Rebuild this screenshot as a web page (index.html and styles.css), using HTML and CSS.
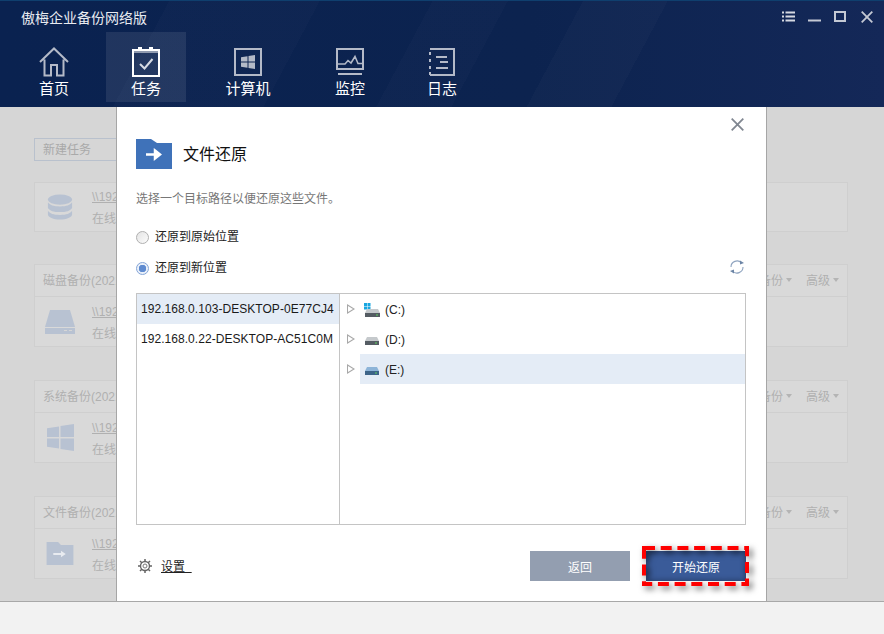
FILE: index.html
```html
<!DOCTYPE html>
<html lang="zh-CN">
<head>
<meta charset="utf-8">
<title>傲梅企业备份网络版</title>
<link rel="stylesheet" href="styles.css">
</head>
<body>
<div class="app">
  <header class="header">
    <div class="titlebar">
      <span class="app-title">傲梅企业备份网络版</span>
      <div class="win-controls">
        <svg class="wc" width="13" height="11" viewBox="0 0 13 11"><path d="M0 1.500h2M3.500 1.500h9.500M0 5.500h2M3.500 5.500h9.500M0 9.500h2M3.500 9.500h9.500" stroke="#d5d9e2" stroke-width="2" fill="none"/></svg>
        <svg class="wc" width="13" height="11" viewBox="0 0 13 11"><path d="M0 9.500h13" stroke="#c4c9d4" stroke-width="2"/></svg>
        <svg class="wc" width="12" height="11" viewBox="0 0 12 11"><rect x="1" y="1" width="10" height="9" stroke="#c4c9d4" stroke-width="2" fill="none"/></svg>
        <svg class="wc" width="12" height="12" viewBox="0 0 12 12"><path d="M.7.7l10.600 10.600M11.300.7L.7 11.300" stroke="#c4c9d4" stroke-width="1.800" fill="none"/></svg>
      </div>
    </div>
    <nav class="nav">
      <div class="nav-item">
        <svg width="30" height="30" viewBox="0 0 30 30"><path d="M1 15L15 1.500 29 15M5.500 12.500V28.500H12V18h6v10.500h6.500V12.500" fill="none" stroke="#b4bac8" stroke-width="2"/></svg>
        <span>首页</span>
      </div>
      <div class="nav-item active gap-s">
        <svg width="28" height="30" viewBox="0 0 28 30"><path d="M1 3h26v26H1z" fill="none" stroke="#fff" stroke-width="2"/><path d="M6 0h4v4H6zM17 0h4v4h-4z" fill="#fff"/><path d="M1 5h26" stroke="#fff" stroke-width="1"/><path d="M8 17l4.500 4.500L20.500 12" fill="none" stroke="#d7dbe4" stroke-width="2"/></svg>
        <span>任务</span>
      </div>
      <div class="nav-item gap-l">
        <svg width="28" height="28" viewBox="0 0 28 28"><rect x="1" y="1" width="26" height="26" fill="none" stroke="#b4bac8" stroke-width="2"/><path d="M7 9.200l6.500-1v5.400H7zM14.500 8l6.500-1v6.600h-6.500zM7 14.600h6.500v5.200l-6.500-1zM14.500 14.600H21V21l-6.500-1z" fill="#b4bac8"/></svg>
        <span>计算机</span>
      </div>
      <div class="nav-item gap-l">
        <svg width="28" height="28" viewBox="0 0 28 28"><path d="M1 1h26v20H1z" fill="none" stroke="#b4bac8" stroke-width="2"/><path d="M2 16h7l3-3.500 3 2.500 4-6.500 3 7h5" fill="none" stroke="#b4bac8" stroke-width="1.500"/><path d="M2 26h24" stroke="#b4bac8" stroke-width="2"/></svg>
        <span>监控</span>
      </div>
      <div class="nav-item gap-s">
        <svg width="26" height="28" viewBox="0 0 26 28"><path d="M1 1h24v26H1" fill="none" stroke="#b4bac8" stroke-width="2"/><path d="M0 4h2v3H0zM0 11h2v3H0zM0 18h2v3H0zM0 24h2v3H0zM7 8h11v2H7zM11 13h8v2h-8zM7 19h12v2H7z" fill="#b4bac8"/></svg>
        <span>日志</span>
      </div>
    </nav>
  </header>

  <main class="content">
    <div class="fake-input">新建任务</div>

    <section class="card first">
      <div class="card-body">
        <svg width="26" height="26" viewBox="0 0 28 28"><ellipse cx="14" cy="6" rx="13" ry="5.500" fill="#b8c2d2"/><path d="M1 9c2 3 6 4.500 13 4.500S25 12 27 9v6c-2 3-6 4.500-13 4.500S3 18 1 15zM1 18c2 3 6 4.500 13 4.500S25 21 27 18v4c0 3-6 5.500-13 5.500S1 25 1 22z" fill="#b8c2d2"/></svg>
        <div class="card-text"><span class="path">\\192</span><span class="state">在线</span></div>
      </div>
    </section>

    <section class="card">
      <div class="card-head"><span>磁盘备份(2021</span><div class="ops"><span>备份</span><i></i><span class="op2">高级</span><i></i></div></div>
      <div class="card-body">
        <svg width="30" height="24" viewBox="0 0 30 24"><path d="M5 0h20l5 17H0z" fill="#b8c2d2"/><path d="M0 18h30v6H0z" fill="#b8c2d2"/><path d="M19 20.500h3M24 20.500h3" stroke="#d6d6d6"/></svg>
        <div class="card-text"><span class="path">\\192</span><span class="state">在线</span></div>
      </div>
    </section>

    <section class="card">
      <div class="card-head"><span>系统备份(2021</span><div class="ops"><span>备份</span><i></i><span class="op2">高级</span><i></i></div></div>
      <div class="card-body">
        <svg width="27" height="27" viewBox="0 0 28 28"><path d="M0 4.500l12.500-2v11H0zM14 2.200L28 0v13.500H14zM0 15h12.500v10.500L0 23.500zM14 15h14v13l-14-2.200z" fill="#b8c2d2"/></svg>
        <div class="card-text"><span class="path">\\192</span><span class="state">在线</span></div>
      </div>
    </section>

    <section class="card">
      <div class="card-head"><span>文件备份(2021</span><div class="ops"><span>备份</span><i></i><span class="op2">高级</span><i></i></div></div>
      <div class="card-body">
        <svg width="28" height="23" viewBox="0 0 28 24"><path d="M0 0h12l3 3h13v21H0z" fill="#b8c2d2"/><path d="M7 11.500h8V9l5 3.500-5 3.500v-2.500H7z" fill="#e8ebf0"/></svg>
        <div class="card-text"><span class="path">\\192</span><span class="state">在线</span></div>
      </div>
    </section>
  </main>

  <footer class="footer"></footer>

  <div class="modal">
    <button class="close" aria-label="关闭"><svg width="13" height="13" viewBox="0 0 13 13"><path d="M.7.7l11.600 11.600M12.300.7L.7 12.300" stroke="#808791" stroke-width="1.800" fill="none"/></svg></button>
    <div class="modal-title">
      <svg width="36" height="30" viewBox="0 0 36 30"><path d="M0 0h15l6 4h15v26H0z" fill="#3f72b9"/><path d="M10 15.500h14M19 11.500l5 4-5 4z" stroke="#fff" stroke-width="2.500" fill="#fff"/></svg>
      <h1>文件还原</h1>
    </div>
    <p class="hint">选择一个目标路径以便还原这些文件。</p>
    <label class="radio"><span class="dot"></span>还原到原始位置</label>
    <div class="radio-row">
      <label class="radio"><span class="dot on"></span>还原到新位置</label>
      <svg class="refresh" width="16" height="14" viewBox="0 0 16 14"><path d="M2 7a6 6 0 0 1 10.500-4" fill="none" stroke="#8ea3bf" stroke-width="1.100"/><path d="M14 7a6 6 0 0 1-10.500 4" fill="none" stroke="#8ea3bf" stroke-width="1.100"/><path d="M11 .5l4 2.500-4 1.500zM5 13.500L1 11l4-1.500z" fill="#6c85a6"/></svg>
    </div>
    <div class="browser">
      <ul class="hosts">
        <li class="sel">192.168.0.103-DESKTOP-0E77CJ4</li>
        <li>192.168.0.22-DESKTOP-AC51C0M</li>
      </ul>
      <ul class="drives">
        <li><span class="tri"></span><span class="drive-cell"><svg class="drive" width="16" height="14" viewBox="0 0 16 14"><path d="M0 0h3v3H0zM3.500 0h3v3h-3zM0 3.500h3v3H0zM3.500 3.500h3v3h-3z" fill="#19a6e0"/><path d="M3 6h11l2 4H1z" fill="#c5c9cc"/><path d="M1 10h15v4H1z" fill="#555c63"/><path d="M12 11.500h2v1h-2z" fill="#5fd15f"/></svg><span>(C:)</span></span></li>
        <li><span class="tri"></span><span class="drive-cell"><svg class="drive" width="16" height="14" viewBox="0 0 16 14"><path d="M3 4h10l2 4H1z" fill="#c5c9cc"/><path d="M1 8h14v4H1z" fill="#555c63"/><path d="M11 9.500h2v1h-2z" fill="#5fd15f"/></svg><span>(D:)</span></span></li>
        <li><span class="tri"></span><span class="drive-cell sel"><svg class="drive" width="16" height="14" viewBox="0 0 16 14"><path d="M3 4h10l2 4H1z" fill="#8db4d8"/><path d="M1 8h14v4H1z" fill="#3d6488"/><path d="M11 9.500h2v1h-2z" fill="#5fd15f"/></svg><span>(E:)</span></span></li>
      </ul>
    </div>
    <div class="modal-foot">
      <div class="settings">
        <svg width="14" height="14" viewBox="0 0 14 14"><circle cx="7" cy="7" r="4.500" fill="none" stroke="#666" stroke-width="1.400"/><circle cx="7" cy="7" r="2" fill="none" stroke="#777"/><path d="M7 0v2.500M7 11.500V14M0 7h2.500M11.500 7H14M2 2l1.800 1.800M10.200 10.200L12 12M12 2l-1.800 1.800M3.800 10.200L2 12" stroke="#666" stroke-width="1.500"/></svg>
        <a class="settings-link">设置&nbsp;&nbsp;</a>
      </div>
      <button class="btn back">返回</button>
      <div class="start-wrap">
        <button class="btn start">开始还原</button>
        <svg class="marker" width="107" height="40" viewBox="0 0 107 40"><rect x="2" y="2" width="103" height="36" fill="none" stroke="#fe0000" stroke-width="4" stroke-dasharray="11 5.700"/></svg>
      </div>
    </div>
  </div>
</div>
</body>
</html>
```
FILE: styles.css
```css
* { box-sizing: border-box; }
html, body { margin: 0; padding: 0; }
body {
  width: 884px;
  height: 634px;
  overflow: hidden;
  font-family: "Liberation Sans", "Noto Sans CJK SC", sans-serif;
}
.app {
  position: relative;
  width: 884px;
  height: 634px;
  display: flex;
  flex-direction: column;
  background: #f2f2f2;
}
.header {
  height: 107px;
  flex: none;
  color: #fff;
  border-top: 1px solid #0f3f6e;
  background:
    linear-gradient(118deg, transparent 0 62%, rgba(255,255,255,.02) 62% 71%, transparent 71% 100%),
    linear-gradient(118deg, transparent 0 18%, rgba(255,255,255,.015) 18% 34%, transparent 34% 46%, rgba(255,255,255,.015) 46% 54%, transparent 54%),
    linear-gradient(90deg, #0a2250 0%, #0c234f 60%, #142858 100%);
}
.titlebar {
  height: 31px;
  display: flex;
  align-items: center;
  justify-content: space-between;
  padding: 0 11px 0 21px;
}
.app-title { font-size: 14px; color: #e8ebf0; }
.win-controls { display: flex; align-items: center; gap: 13px; }
.wc:nth-child(3) { margin-right: 2px; }
.nav { display: flex; padding-left: 14px; }
.nav-item {
  width: 80px;
  height: 70px;
  display: flex;
  flex-direction: column;
  align-items: center;
  padding-top: 15px;
  font-size: 15px;
}
.nav-item svg { height: 30px; flex: none; }
.nav-item span { margin-top: 2px; line-height: 20px; }
.nav-item.active { background: rgba(255,255,255,.09); }
.gap-s { margin-left: 12px; }
.gap-l { margin-left: 22px; }

.content {
  height: 495px;
  flex: none;
  background: #d6d6d6;
  border-bottom: 1px solid #a8a8a8;
  padding: 31px 36px 0 34px;
  color: #b0b0b0;
  font-size: 12px;
}
.fake-input {
  width: 120px;
  height: 23px;
  border: 1px solid #b9c1cd;
  padding-left: 8px;
  line-height: 23px;
  color: #a9a9a9;
}
.card {
  border: 1px solid #cfcfcf;
  background: #d9d9d9;
  margin-top: 33px;
}
.card.first { margin-top: 21px; }
.first + .card { margin-top: 32px; }
.card-head {
  height: 32px;
  padding: 0 8px 2px;
  display: flex;
  align-items: center;
  justify-content: space-between;
  border-bottom: 1px solid #cfcfcf;
}
.ops { display: flex; align-items: center; }
.ops i {
  width: 0;
  height: 0;
  margin-left: 3px;
  border-left: 3.500px solid transparent;
  border-right: 3.500px solid transparent;
  border-top: 4px solid #b4b4b4;
}
.op2 { margin-left: 14px; }
.card-body {
  height: 49px;
  display: grid;
  grid-template-columns: 30px auto;
  justify-content: start;
  justify-items: center;
  align-items: center;
  column-gap: 17px;
  padding-left: 10px;
}
.first .card-body { height: 48px; }
.card-text {
  justify-self: start;
  display: flex;
  flex-direction: column;
  line-height: 22px;
  padding-top: 2px;
}
.path { text-decoration: underline; }

.footer { flex: 1; }

.modal {
  position: absolute;
  left: 116px;
  top: 107px;
  width: 651px;
  height: 494px;
  background: #fff;
  border-left: 1px solid #a6a6a6;
  border-right: 1px solid #a6a6a6;
  padding: 32px 20px 0 19px;
  color: #111;
}
.close {
  position: absolute;
  left: 614px;
  top: 11px;
  padding: 0;
  border: 0;
  background: none;
  display: flex;
}
.modal-title { display: flex; align-items: center; gap: 11px; height: 30px; }
.modal-title h1 { margin: 0 0 2px; font-size: 16px; font-weight: 400; color: #111; }
.hint { margin: 22px 0 0; font-size: 12px; line-height: 16px; color: #777; }
.radio {
  display: flex;
  align-items: center;
  gap: 6px;
  font-size: 12px;
  line-height: 18px;
  color: #222;
}
.modal > .radio { margin-top: 21px; }
.radio-row {
  display: flex;
  align-items: center;
  justify-content: space-between;
  margin-top: 13px;
}
.refresh { margin: -3px 1px 0 0; }
.dot {
  width: 13px;
  height: 13px;
  border-radius: 50%;
  border: 1px solid #b0b0b0;
  background: linear-gradient(135deg, #e4e4e4, #fbfbfb);
}
.dot.on {
  border-color: #85a6d8;
  background: radial-gradient(circle, #5f8bd0 0 3.500px, #eaf0f9 4px);
}
.browser {
  margin-top: 16px;
  height: 232px;
  display: flex;
  border: 1px solid #c4c4c4;
  font-size: 12px;
}
.hosts, .drives { list-style: none; margin: 0; padding: 0; }
.hosts { width: 203px; flex: none; border-right: 1px solid #c4c4c4; }
.hosts li {
  height: 30px;
  line-height: 31px;
  padding-left: 4px;
  white-space: nowrap;
  letter-spacing: .05px;
  color: #1a1a1a;
}
.hosts li.sel { background: #e4ecf6; }
.drives { flex: 1; }
.drives li { height: 30px; display: flex; align-items: center; }
.tri {
  margin-left: 7px;
  width: 0;
  height: 0;
  flex: none;
  border-top: 5px solid transparent;
  border-bottom: 5px solid transparent;
  border-left: 8px solid #a8a8a8;
  position: relative;
}
.tri::after {
  content: "";
  position: absolute;
  left: -7px;
  top: -3px;
  border-top: 3px solid transparent;
  border-bottom: 3px solid transparent;
  border-left: 5px solid #fff;
}
.drive-cell {
  margin-left: 5px;
  height: 30px;
  flex: 1;
  display: flex;
  align-items: center;
  gap: 5px;
  padding: 1px 0 0 4px;
  color: #222;
}
.drive-cell.sel { background: #e4ecf6; }
.drive { flex: none; }
.modal-foot {
  margin-top: 26px;
  display: flex;
  align-items: center;
  height: 30px;
}
.settings { display: flex; align-items: center; gap: 9px; margin: 0 auto 0 2px; }
.settings-link {
  font-size: 12px;
  line-height: 16px;
  padding-top: 1px;
  color: #222;
  text-decoration: underline;
}
.btn {
  width: 100px;
  height: 30px;
  border: 0;
  padding: 0;
  color: #fff;
  font: 12px "Liberation Sans", "Noto Sans CJK SC", sans-serif;
}
.back { background: #939eb0; }
.start-wrap { position: relative; margin-left: 16px; }
.start {
  display: block;
  background: #3a5b99;
  box-shadow: inset 0 0 6px rgba(0,0,0,.35);
}
.marker {
  position: absolute;
  left: -4px;
  top: -5px;
  filter: drop-shadow(3px 3px 3px rgba(0,0,0,.6));
}
```
